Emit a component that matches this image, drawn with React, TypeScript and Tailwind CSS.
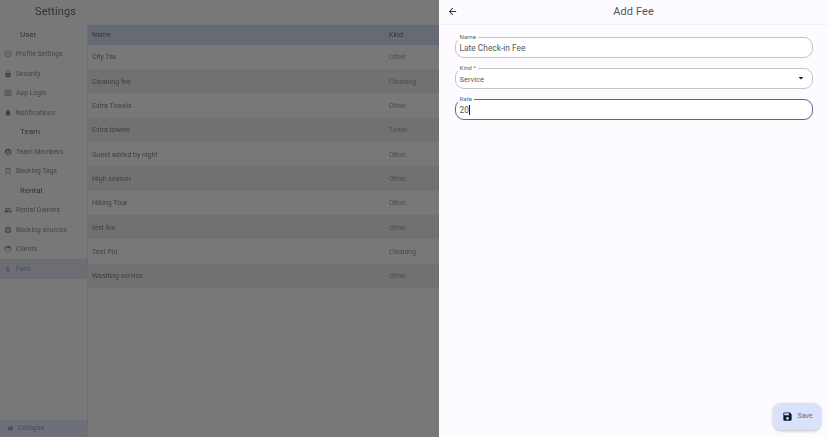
import { useState } from "react";
import {
  MdArrowBack,
  MdArrowDropDown,
  MdAttachMoney,
  MdCalendarViewMonth,
  MdFace,
  MdKeyboardDoubleArrowLeft,
  MdLanguage,
  MdLock,
  MdNotifications,
  MdOutlineBookmarkBorder,
  MdOutlineInfo,
  MdPeople,
  MdSave,
  MdSupervisedUserCircle,
} from "react-icons/md";

const sections = [
  {
    title: "User",
    items: [
      { label: "Profile Settings", icon: MdOutlineInfo },
      { label: "Security", icon: MdLock },
      { label: "App Login", icon: MdCalendarViewMonth },
      { label: "Notifications", icon: MdNotifications },
    ],
  },
  {
    title: "Team",
    items: [
      { label: "Team Members", icon: MdSupervisedUserCircle },
      { label: "Booking Tags", icon: MdOutlineBookmarkBorder },
    ],
  },
  {
    title: "Rental",
    items: [
      { label: "Rental Owners", icon: MdPeople },
      { label: "Booking sources", icon: MdLanguage },
      { label: "Clients", icon: MdFace },
      { label: "Fees", icon: MdAttachMoney, active: true },
    ],
  },
];

const fees = [
  ["City Tax", "Other"],
  ["Cleaning fee", "Cleaning"],
  ["Extra Towels", "Other"],
  ["Extra towels", "Towel"],
  ["Guest added by night", "Other"],
  ["High season", "Other"],
  ["Hiking Tour", "Other"],
  ["test fee", "Other"],
  ["Test Poi", "Cleaning"],
  ["Washing service", "Other"],
];

function Sidebar() {
  return (
    <aside className="flex h-[412px] w-[88px] shrink-0 flex-col border-r border-[#6c6c6d]">
      <div className="flex-1">
        {sections.map((section) => (
          <div key={section.title}>
            <div className="flex h-[19.5px] items-center pl-[20px] text-[8px] text-[#333335]">
              {section.title}
            </div>
            {section.items.map((item) => (
              <div
                key={item.label}
                className={`flex h-[19.5px] items-center gap-[4px] pl-[4px] text-[6.6px] tracking-[0.12px] ${
                  item.active ? "bg-[#6c6e74] text-[#454d60]" : "text-[#434345]"
                }`}
              >
                <item.icon size={8} />
                <span className="pt-[2px]">{item.label}</span>
              </div>
            ))}
          </div>
        ))}
      </div>
      <div className="flex h-[17px] items-center gap-[3px] bg-[#6d7079] pl-[6px] text-[6.6px] tracking-[0.12px] text-[#454a54]">
        <MdKeyboardDoubleArrowLeft size={9} className="text-[#2c2c30]" />
        <span>Collapse</span>
      </div>
    </aside>
  );
}

function FeeTable() {
  return (
    <div className="min-w-0 flex-1">
      <div className="flex h-[19.5px] items-center bg-[#666a75] pl-[4px] text-[7px] text-[#33363e]">
        <span className="w-[297px]">Name</span>
        <span>Kind</span>
      </div>
      {fees.map(([name, kind], i) => (
        <div
          key={name}
          className={`flex h-[24.35px] items-center pl-[4px] pt-[1.5px] text-[7px] text-[#3f3f41] ${
            i % 2 === 1 ? "bg-[#717172]" : "bg-[#787878]"
          }`}
        >
          <span className="w-[297px]">{name}</span>
          <span className="text-[#4c4c4e]">{kind}</span>
        </div>
      ))}
    </div>
  );
}

function Field({
  label,
  focused,
  children,
}: {
  label: string;
  focused?: boolean;
  children: React.ReactNode;
}) {
  return (
    <div
      className={`relative flex h-[21.5px] items-center rounded-[9px] border bg-white pl-[3.5px] pr-[5px] pt-[2px] ${
        focused ? "border-[#4f6b9c]" : "border-[#c4c4c6]"
      }`}
    >
      <span
        className={`absolute -top-[5px] left-[1.5px] bg-white px-[2px] text-[6.2px] leading-[8px] ${
          focused ? "text-[#4f6b9c]" : "text-[#66666a]"
        }`}
      >
        {label}
      </span>
      {children}
    </div>
  );
}

export default function App() {
  const [name] = useState("Late Check-in Fee");

  return (
    <div className="relative flex h-[437px] w-[828px] overflow-hidden bg-[#787878] font-['Roboto',sans-serif]">
      <div className="w-[439px] shrink-0 blur-[0.35px]">
        <div className="flex h-[25px] items-center pl-[35px] text-[11px] tracking-[0.1px] text-[#343436]">
          Settings
        </div>
        <div className="flex">
          <Sidebar />
          <FeeTable />
        </div>
      </div>

      <div className="flex min-w-0 flex-1 flex-col bg-[#fdfbff]">
        <header className="relative flex h-[25px] shrink-0 items-center justify-center border-b border-[#f3f1f5]">
          <MdArrowBack size={11} className="absolute left-[8px] top-[5.5px] text-[#333]" />
          <h1 className="text-[11px] tracking-[0.1px] text-[#555558]">Add Fee</h1>
        </header>

        <div className="flex flex-col gap-[9.5px] pl-[16px] pr-[15px] pt-[11.5px]">
          <Field label="Name">
            <span className="text-[8.4px] text-[#58585c]">{name}</span>
          </Field>
          <Field label="Kind *">
            <span className="flex-1 text-[7.5px] text-[#58585c]">Service</span>
            <MdArrowDropDown size={12} className="-mt-[2px] text-[#222]" />
          </Field>
          <Field label="Rate" focused>
            <span className="border-r border-[#222] pr-[0.5px] text-[8.4px] leading-[10px] text-[#58585c]">
              20
            </span>
          </Field>
        </div>

        <div className="mt-auto flex justify-end pb-[7px] pr-[7px]">
          <button className="flex h-[27px] w-[48px] items-center justify-center gap-[5px] rounded-[8px] bg-[#d8e2fb] text-[7px] text-[#666b7a] shadow-[0_1px_3px_rgba(0,0,0,0.25)]">
            <MdSave size={11} className="text-[#10182c]" />
            <span>Save</span>
          </button>
        </div>
      </div>
    </div>
  );
}
